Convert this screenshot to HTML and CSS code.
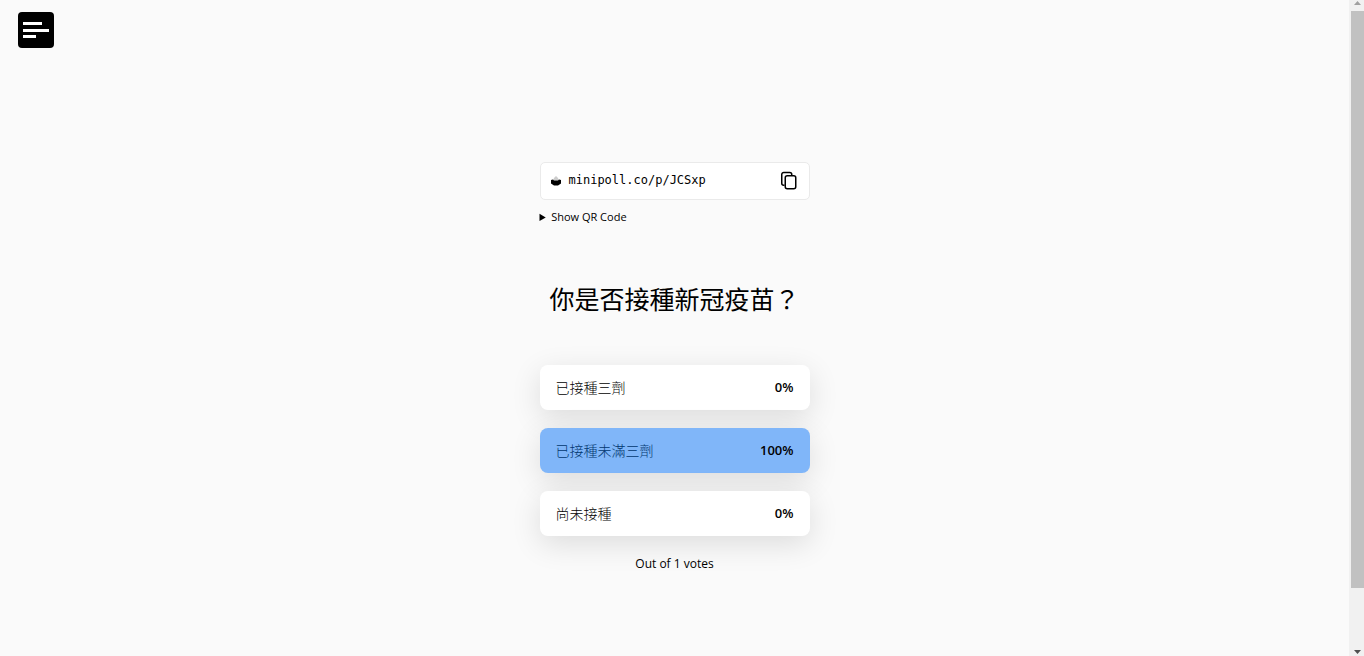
FILE: index.html
```
<!DOCTYPE html>
<html lang="zh-Hant">
<head>
    <meta charset="utf-8">
    <title>Minipoll</title>
    <link rel="stylesheet" href="styles.css">
</head>
<body>
    <div class="page">
        <header class="header">
            <button class="menu-button" type="button" aria-label="Menu">
                <svg width="36" height="36" viewBox="0 0 36 36" fill="#fff">
                    <rect x="5" y="10" width="19" height="3"/>
                    <rect x="5" y="17" width="26" height="3"/>
                    <rect x="5" y="23" width="13" height="3"/>
                </svg>
            </button>
        </header>

        <main class="poll">
            <div class="share">
                <svg class="logo" width="12" height="12" viewBox="0 0 12 12">
                    <path d="M4 3l2-2 2 2 1 2.500H3z" fill="#ccc"/>
                    <path d="M1 5l2-.5 1 1h4l1-1 2 .5v3.500L8 10.500H4L1 8.500z" fill="#000"/>
                </svg>
                <a class="share-link" href="#">minipoll.co/p/JCSxp</a>
                <button class="copy-button" type="button" aria-label="Copy link">
                    <svg width="18" height="20" viewBox="0 0 18 20" fill="none" stroke="#000" stroke-width="1.500">
                        <path d="M4.500 14.250H3.750a2 2 0 0 1-2-2V3.500a2 2 0 0 1 2-2h6a2 2 0 0 1 2 2v1"/>
                        <rect x="5.250" y="4.750" width="10.500" height="13" rx="2"/>
                    </svg>
                </button>
            </div>
            <details class="qr">
                <summary>Show QR Code</summary>
            </details>

            <h1 class="question">你是否接種新冠疫苗？</h1>

            <div class="options">
                <button class="option" type="button">
                    <span class="option-name">已接種三劑</span>
                    <span class="option-percent">0%</span>
                </button>
                <button class="option option-voted" type="button">
                    <span class="option-name">已接種未滿三劑</span>
                    <span class="option-percent">100%</span>
                </button>
                <button class="option" type="button">
                    <span class="option-name">尚未接種</span>
                    <span class="option-percent">0%</span>
                </button>
            </div>
            <p class="votes">Out of 1 votes</p>
        </main>
    </div>

    <div class="scrollbar" aria-hidden="true">
        <svg width="11" height="11" viewBox="0 0 11 11"><path d="M2 5h7L5.500 1z" fill="#a0a0a0"/></svg>
        <div class="scrollbar-thumb"></div>
        <div class="scrollbar-space"></div>
        <svg width="11" height="11" viewBox="0 0 11 11"><path d="M2 5h7L5.500 9z" fill="#505050"/></svg>
    </div>
</body>
</html>
```

FILE: styles.css
```
* {
    box-sizing: border-box;
}
body {
    display: flex;
    min-height: 100vh;
    margin: 0;
    background: #fafafa;
    color: #000;
    font-family: "Open Sans", "Noto Sans CJK TC", sans-serif;
}
button {
    padding: 0;
    border: 0;
    color: inherit;
    font: inherit;
    cursor: pointer;
}
svg {
    display: block;
}
.page {
    flex: 1;
}
.header {
    padding: 12px 18px;
}
.menu-button {
    display: block;
    border-radius: 4px;
    background: #000;
}
.poll {
    width: 270px;
    margin: 102px auto 0;
}
.share {
    display: flex;
    align-items: center;
    height: 38px;
    padding: 0 11px 0 9px;
    border: 1px solid #eaeaea;
    border-radius: 5px;
    background: #fff;
}
.share-link {
    flex: 1;
    margin-left: 7px;
    padding-bottom: 2px;
    color: #000;
    font-family: "DejaVu Sans Mono", monospace;
    font-size: 12px;
    text-decoration: none;
}
.copy-button {
    background: none;
}
.qr {
    margin-top: 8px;
    font-size: 11px;
    line-height: 18px;
}
.question {
    margin: 54px 0 47px;
    font-size: 25px;
    font-weight: 400;
    line-height: 38px;
    text-align: center;
}
.options {
    display: flex;
    flex-direction: column;
    gap: 18px;
}
.option {
    display: flex;
    align-items: center;
    justify-content: space-between;
    height: 45px;
    padding: 0 16px 2px;
    border-radius: 8px;
    background: #fff;
    box-shadow: 0 8px 30px rgba(0, 0, 0, 0.12);
    font-size: 14px;
}
.option-voted {
    background: #80b6f9;
}
.option-name {
    font-weight: 300;
}
.option-voted .option-name {
    color: #00366f;
}
.option-percent {
    font-size: 13px;
    font-weight: 600;
}
.votes {
    margin: 18px 0;
    font-size: 12px;
    line-height: 20px;
    text-align: center;
}
.scrollbar {
    display: flex;
    flex-direction: column;
    align-items: center;
    width: 15px;
    padding-left: 2px;
    background: #f1f1f1;
}
.scrollbar-thumb {
    flex: 577;
    width: 100%;
    background: #c1c1c1;
}
.scrollbar-space {
    flex: 57;
}
```
